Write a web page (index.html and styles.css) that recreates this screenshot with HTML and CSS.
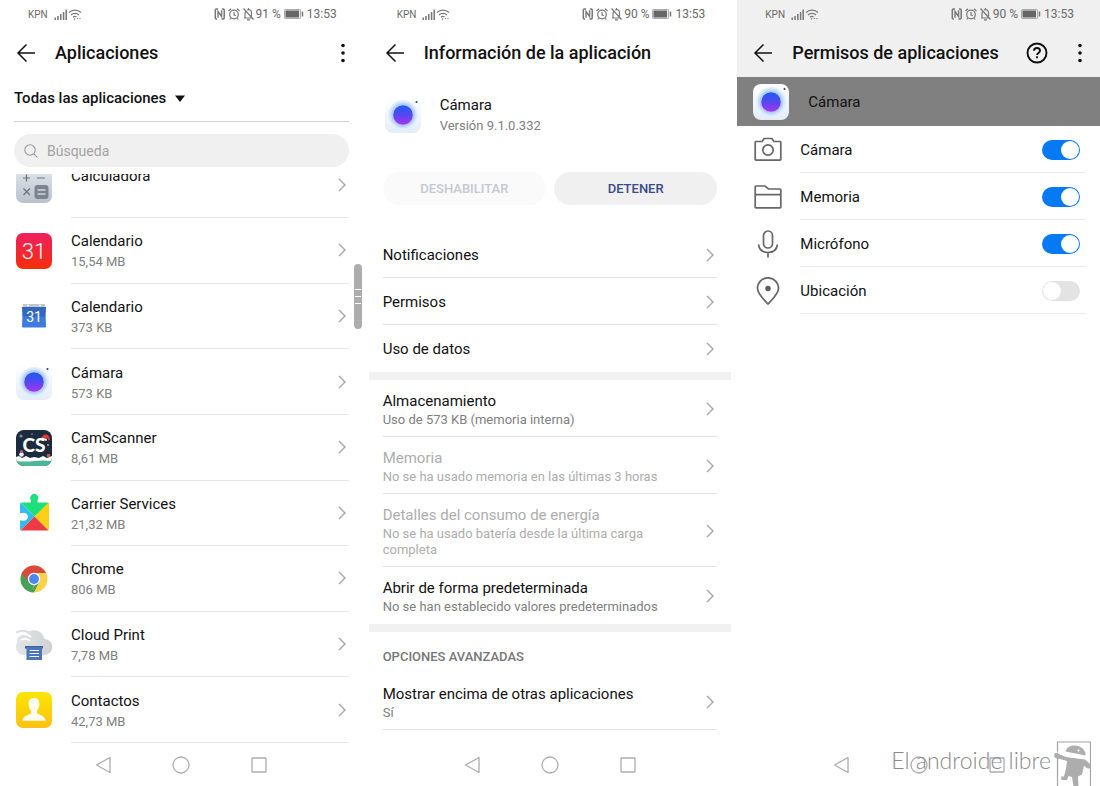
FILE: index.html
```html
<!DOCTYPE html>
<html lang="es">
<head>
<meta charset="utf-8">
<meta name="viewport" content="width=device-width, initial-scale=1">
<title>Permisos de aplicaciones</title>
<link rel="stylesheet" href="styles.css">
</head>
<body>
<svg class="sprite" aria-hidden="true">
  <defs>
    <linearGradient id="g-lens" x1="0" y1="0" x2="0" y2="1"><stop offset="0" stop-color="#1a5cf0"/><stop offset="0.5" stop-color="#5648ee"/><stop offset="1" stop-color="#a832f2"/></linearGradient>
    <linearGradient id="g-cam" x1="0" y1="0" x2="0" y2="1"><stop offset="0" stop-color="#ffffff"/><stop offset="1" stop-color="#e3edf6"/></linearGradient>
    <linearGradient id="g-red" x1="0" y1="0" x2="0" y2="1"><stop offset="0" stop-color="#f01f62"/><stop offset="1" stop-color="#f52e08"/></linearGradient>
    <linearGradient id="g-yellow" x1="0" y1="0" x2="0" y2="1"><stop offset="0" stop-color="#fbe600"/><stop offset="1" stop-color="#fcc111"/></linearGradient>
    <linearGradient id="g-calc" x1="0" y1="0" x2="0" y2="1"><stop offset="0" stop-color="#e4e8ee"/><stop offset="1" stop-color="#b9c1cc"/></linearGradient>
    <linearGradient id="g-cloud" x1="0" y1="0" x2="1" y2="0"><stop offset="0" stop-color="#e4e5e6"/><stop offset="1" stop-color="#cfd1d3"/></linearGradient>
    <clipPath id="c-cs"><rect width="36" height="36" rx="8"/></clipPath>
    <clipPath id="c-chrome"><circle cx="18" cy="18" r="13.500"/></clipPath>
    <clipPath id="c-puzzle"><path d="M5.500 7.500H15V5.200a4 4 0 1 1 6.500 0V7.500H31.500A1.500 1.500 0 0 1 33 9v25a1.500 1.500 0 0 1-1.500 1.500h-26A1.500 1.500 0 0 1 4 34v-8.500H6.500a4 4 0 1 0 0-7.500H4V9a1.500 1.500 0 0 1 1.500-1.500z"/></clipPath>
  </defs>
  <symbol id="i-back" viewBox="0 0 20 20"><path d="M10.500 1.500 2 10l8.500 8.500M2 10h17" fill="none" stroke="#111" stroke-width="1.500"/></symbol>
  <symbol id="i-dots" viewBox="0 0 6 20"><circle cx="3" cy="2.500" r="1.800"/><circle cx="3" cy="10" r="1.800"/><circle cx="3" cy="17.500" r="1.800"/></symbol>
  <symbol id="i-chevron" viewBox="0 0 8 14"><path d="m1 1 6 6-6 6" fill="none" stroke="#a6a6a6" stroke-width="1.400"/></symbol>
  <symbol id="i-signal" viewBox="0 0 28 14">
    <path d="M1.200 13v-2.500M4 13V9M6.800 13V7M9.600 13V5M12.200 13V2.500" stroke="#777" stroke-width="1.500" fill="none"/>
    <path d="M15 5.500a8.600 8.600 0 0 1 12 0M17 8a5.700 5.700 0 0 1 8 0M19 10.300a2.800 2.800 0 0 1 3.500-.3" stroke="#777" stroke-width="1.200" fill="none"/>
    <circle cx="20.600" cy="12" r=".8" fill="#777"/><path d="m22.500 12 1-1.300 1 1.300zm2.500-.8h2l-1 1.300z" fill="#777"/>
  </symbol>
  <symbol id="i-status" viewBox="0 0 42 14">
    <path d="M4 2H2.300Q1.300 2 1.300 3v8q0 1 1 1H3M8 2h1.200q1 0 1 1v8q0 1-1 1H7.500" stroke="#777" stroke-width="1.500" fill="none"/>
    <path d="M4 10.800V4.500l3.600 5V3.200" stroke="#777" stroke-width="1.400" fill="none"/>
    <g fill="none" stroke="#777" stroke-width="1.200"><circle cx="20" cy="7.500" r="4.300"/><path d="M20 5v2.800l1.800 1M14.500 4l2.500-2.200M25.500 4 23 1.800M17 11l-1.200 1.500M23 11l1.200 1.500"/></g>
    <g fill="none" stroke="#777" stroke-width="1.200"><path d="M30 11h8.500M31 10.500V6.500a3.500 3.500 0 0 1 .7-2M33 3a3 3 0 0 1 4.500 3v3.500M34.500 2.500V1M29.500 1.500l10 11M33 12.800h3"/></g>
  </symbol>
  <symbol id="i-battery" viewBox="0 0 20 10"><rect x=".5" y=".5" width="16" height="9" rx=".8" fill="#eee" stroke="#aaa"/><path d="M1.500 1.500h13.500v7H1.500z" fill="#666"/><path d="M18.500 2.500v5" stroke="#777" stroke-width="1.500"/></symbol>
  <symbol id="i-camera-app" viewBox="0 0 36 36">
    <rect width="36" height="36" rx="8" fill="url(#g-cam)"/>
    <circle cx="18" cy="18" r="15" fill="#e4effc"/><circle cx="18" cy="18" r="13.500" fill="#cfe1fb"/><circle cx="18" cy="18" r="11.700" fill="#b3cdf8"/>
    <circle cx="18" cy="18" r="9.800" fill="url(#g-lens)"/><circle cx="31.500" cy="5" r="1" fill="#333a4a"/>
  </symbol>
  <symbol id="i-nav-back" viewBox="0 0 16 18"><path d="M15 1.500v15L1.500 9z" fill="none" stroke="#adadad" stroke-width="1.300" stroke-linejoin="round"/></symbol>
  <symbol id="i-nav-home" viewBox="0 0 18 18"><circle cx="9" cy="9" r="8" fill="none" stroke="#adadad" stroke-width="1.300"/></symbol>
  <symbol id="i-nav-recent" viewBox="0 0 16 16"><rect x="1" y="1" width="14" height="14" rx=".5" fill="none" stroke="#adadad" stroke-width="1.300"/></symbol>
</svg>

<main class="screens">
  <section class="screen">
    <div class="status">
      <span class="carrier">KPN</span>
      <svg class="status-signal"><use href="#i-signal"/></svg>
      <svg class="status-icons"><use href="#i-status"/></svg>
      <span class="status-text">91 %</span>
      <svg class="battery"><use href="#i-battery"/></svg>
      <span class="status-text">13:53</span>
    </div>
    <header class="bar">
      <button class="icon-btn" aria-label="Atrás"><svg class="back"><use href="#i-back"/></svg></button>
      <h1 class="title">Aplicaciones</h1>
      <button class="icon-btn" aria-label="Más opciones"><svg class="dots"><use href="#i-dots"/></svg></button>
    </header>
    <div class="filter">
      <select class="filter-select" aria-label="Filtro de aplicaciones"><option>Todas las aplicaciones</option></select>
      <svg class="caret" viewBox="0 0 10 7"><path d="M0 .5h10L5 7z"/></svg>
    </div>
    <div class="search">
      <svg class="search-icon" viewBox="0 0 14 14" fill="none" stroke="#999" stroke-width="1.100"><circle cx="6" cy="6" r="5.200"/><path d="m9.800 9.800 3.500 3.500"/></svg>
      <input class="search-input" type="text" placeholder="Búsqueda" aria-label="Búsqueda">
    </div>
    <div class="list-wrap">
    <ul class="app-list">
      <li class="app-item app-item-clipped"><a class="app-row" href="#">
        <svg class="app-icon" viewBox="0 0 36 36"><rect width="36" height="36" rx="7" fill="url(#g-calc)"/><rect x="18.500" y="18" width="14" height="14" rx="3" fill="#7c8491"/><path d="M10.500 7.500v7M7 11h7M21 11h8M7.500 21.500l6.500 6.500M14 21.500 7.500 28" stroke="#6b727d" stroke-width="1.200"/><path d="M21.500 23h8M21.500 27h8" stroke="#fff" stroke-width="1.200"/></svg>
        <span class="app-main"><span class="app-text"><span class="name">Calculadora</span><span class="size"></span></span><svg class="chevron"><use href="#i-chevron"/></svg></span></a></li>
      <li class="app-item"><a class="app-row" href="#">
        <svg class="app-icon" viewBox="0 0 36 36"><rect width="36" height="36" rx="7" fill="url(#g-red)"/><text class="cal-big" x="18" y="26" text-anchor="middle">31</text></svg>
        <span class="app-main"><span class="app-text"><span class="name">Calendario</span><span class="size">15,54 MB</span></span><svg class="chevron"><use href="#i-chevron"/></svg></span></a></li>
      <li class="app-item"><a class="app-row" href="#">
        <svg class="app-icon" viewBox="0 0 36 36"><path d="M7 6h22v4H7z" fill="#c3c6cc"/><circle cx="12" cy="7.500" r="1" fill="#fff"/><circle cx="24" cy="7.500" r="1" fill="#fff"/><path d="M6 9h24l-.5 5 .5 14.500a1 1 0 0 1-1 1H7a1 1 0 0 1-1-1L6.500 14z" fill="#3f7bdc"/><path d="M6 9h24l-.8 9.500H6.800z" fill="#3367bd"/><text class="cal-small" x="18" y="24" text-anchor="middle">31</text></svg>
        <span class="app-main"><span class="app-text"><span class="name">Calendario</span><span class="size">373 KB</span></span><svg class="chevron"><use href="#i-chevron"/></svg></span></a></li>
      <li class="app-item"><a class="app-row" href="#">
        <svg class="app-icon"><use href="#i-camera-app"/></svg>
        <span class="app-main"><span class="app-text"><span class="name">Cámara</span><span class="size">573 KB</span></span><svg class="chevron"><use href="#i-chevron"/></svg></span></a></li>
      <li class="app-item"><a class="app-row" href="#">
        <svg class="app-icon" viewBox="0 0 36 36"><g clip-path="url(#c-cs)"><path d="M0 0h36v36H0z" fill="#1c2b3e"/><path d="M0 28.500q9 2 18 1t18 0V36H0z" fill="#4db598"/><path d="M0 27l3-1 3 2 4-2 4 2 4-1 5 1 4-2 4 2 5-2v5q-9-1-18 0T0 31z" fill="#fff"/><circle cx="5.500" cy="24.500" r="2.300" fill="#eef"/><circle cx="5.500" cy="21.500" r="1.500" fill="#d8584d"/><circle cx="32.500" cy="25.500" r="1.800" fill="#c85a50"/><circle cx="5" cy="6" r="1.600" fill="#7f8c9d"/><circle cx="32" cy="15" r=".9" fill="#b8c0ca"/><circle cx="16" cy="4" r=".7" fill="#b8c0ca"/></g><text class="cs" x="18" y="22" text-anchor="middle">CS</text><path d="M26 8q.5-4 4-3.500 3.500.5 4 5.500l-1.500.5-1.200-2.500-.8 1.500z" fill="#e03a35"/><path d="m25.500 7.500 5.500 1.800-.5 1.700-5.500-1.800z" fill="#fff"/></svg>
        <span class="app-main"><span class="app-text"><span class="name">CamScanner</span><span class="size">8,61 MB</span></span><svg class="chevron"><use href="#i-chevron"/></svg></span></a></li>
      <li class="app-item"><a class="app-row" href="#">
        <svg class="app-icon icon-over" viewBox="0 0 36 36"><g clip-path="url(#c-puzzle)"><path d="M0-5h36v12L18.500 21.500 4 7z" fill="#1ee07a"/><path d="M4 7 18.500 21.500 4 36z" fill="#2fbdf0"/><path d="M33 7v29L18.500 21.500z" fill="#fdcf17"/><path d="M4 36 18.500 21.500 33 36z" fill="#ec3b45"/></g></svg>
        <span class="app-main"><span class="app-text"><span class="name">Carrier Services</span><span class="size">21,32 MB</span></span><svg class="chevron"><use href="#i-chevron"/></svg></span></a></li>
      <li class="app-item"><a class="app-row" href="#">
        <svg class="app-icon" viewBox="0 0 36 36"><g clip-path="url(#c-chrome)"><path d="M4 4h28v28H4z" fill="#f9d24c"/><path d="M5 9 13 21l5 3-4 9H2z" fill="#43a15c"/><path d="M18 12h15V2H3l2.500 10L12.800 21z" fill="#d94a3d"/><path d="M23.200 21 17 33H13l6-9z" fill="#43a15c"/></g><circle cx="18" cy="18" r="6.200" fill="#f6f6f6"/><circle cx="18" cy="18" r="4.900" fill="#4b87ee"/></svg>
        <span class="app-main"><span class="app-text"><span class="name">Chrome</span><span class="size">806 MB</span></span><svg class="chevron"><use href="#i-chevron"/></svg></span></a></li>
      <li class="app-item"><a class="app-row" href="#">
        <svg class="app-icon" viewBox="0 0 36 36"><path d="M8 28a8 8 0 0 1-7-12C0 10 4 8 8 8 13 1 26 1 28.500 12A8 8 0 0 1 28 28z" fill="url(#g-cloud)"/><path d="M0 5.500Q8 1.500 14.500 6.500" fill="none" stroke="#dcdddf" stroke-width="2"/><path d="M0 8.500q9-4 15 1.500M5 13q5-2.500 9 1" fill="none" stroke="#fff" stroke-width="1.800"/><path d="M9 19h18v2.500H9z" fill="#3c5f9c"/><path d="M10.500 20h15.500v13H10.500z" fill="#4a77bb"/><path d="M13.500 23.500h9.500M13.500 26.500h9.500M13.500 29.500h9.500" stroke="#fff" stroke-width="1.200"/></svg>
        <span class="app-main"><span class="app-text"><span class="name">Cloud Print</span><span class="size">7,78 MB</span></span><svg class="chevron"><use href="#i-chevron"/></svg></span></a></li>
      <li class="app-item"><a class="app-row" href="#">
        <svg class="app-icon" viewBox="0 0 36 36"><rect width="36" height="36" rx="7" fill="url(#g-yellow)"/><path d="M18 6c4 0 5.500 2.500 5.300 6.500-.2 3.500-1.300 5-2.300 6.200v2.500c1.500 1.700 8.500 2 8.500 7.500H6.500c0-5.500 7-5.800 8.500-7.500v-2.500c-1-1.200-2.100-2.700-2.300-6.200C12.500 8.500 14 6 18 6z" fill="#fffdf2"/></svg>
        <span class="app-main"><span class="app-text"><span class="name">Contactos</span><span class="size">42,73 MB</span></span><svg class="chevron"><use href="#i-chevron"/></svg></span></a></li>
    </ul>
    <span class="thumb" aria-hidden="true"><i></i><i></i><i></i></span>
    </div>
    <nav class="nav">
      <button class="nav-btn" aria-label="Atrás"><svg class="nav-back"><use href="#i-nav-back"/></svg></button>
      <button class="nav-btn" aria-label="Inicio"><svg class="nav-home"><use href="#i-nav-home"/></svg></button>
      <button class="nav-btn" aria-label="Recientes"><svg class="nav-recent"><use href="#i-nav-recent"/></svg></button>
    </nav>
  </section>

  <section class="screen">
    <div class="status">
      <span class="carrier">KPN</span>
      <svg class="status-signal"><use href="#i-signal"/></svg>
      <svg class="status-icons"><use href="#i-status"/></svg>
      <span class="status-text">90 %</span>
      <svg class="battery"><use href="#i-battery"/></svg>
      <span class="status-text">13:53</span>
    </div>
    <header class="bar">
      <button class="icon-btn" aria-label="Atrás"><svg class="back"><use href="#i-back"/></svg></button>
      <h1 class="title">Información de la aplicación</h1>
    </header>
    <div class="app-card">
      <svg class="app-icon"><use href="#i-camera-app"/></svg>
      <div class="app-text"><span class="name">Cámara</span><span class="size">Versión 9.1.0.332</span></div>
    </div>
    <div class="actions">
      <button class="pill" disabled>DESHABILITAR</button>
      <button class="pill">DETENER</button>
    </div>
    <ul class="settings">
      <li><a class="setting" href="#"><span class="name">Notificaciones</span><svg class="chevron"><use href="#i-chevron"/></svg></a></li>
      <li><a class="setting" href="#"><span class="name">Permisos</span><svg class="chevron"><use href="#i-chevron"/></svg></a></li>
      <li><a class="setting" href="#"><span class="name">Uso de datos</span><svg class="chevron"><use href="#i-chevron"/></svg></a></li>
    </ul>
    <ul class="settings banded">
      <li><a class="setting" href="#"><span class="setting-text"><span class="name">Almacenamiento</span><span class="detail">Uso de 573 KB (memoria interna)</span></span><svg class="chevron"><use href="#i-chevron"/></svg></a></li>
      <li><a class="setting muted" href="#"><span class="setting-text"><span class="name">Memoria</span><span class="detail">No se ha usado memoria en las últimas 3 horas</span></span><svg class="chevron"><use href="#i-chevron"/></svg></a></li>
      <li><a class="setting muted" href="#"><span class="setting-text"><span class="name">Detalles del consumo de energía</span><span class="detail">No se ha usado batería desde la última carga completa</span></span><svg class="chevron"><use href="#i-chevron"/></svg></a></li>
      <li><a class="setting" href="#"><span class="setting-text"><span class="name">Abrir de forma predeterminada</span><span class="detail">No se han establecido valores predeterminados</span></span><svg class="chevron"><use href="#i-chevron"/></svg></a></li>
    </ul>
    <div class="advanced">
      <h2 class="group-title">OPCIONES AVANZADAS</h2>
      <a class="setting" href="#"><span class="setting-text"><span class="name">Mostrar encima de otras aplicaciones</span><span class="detail">Sí</span></span><svg class="chevron"><use href="#i-chevron"/></svg></a>
    </div>
    <nav class="nav">
      <button class="nav-btn" aria-label="Atrás"><svg class="nav-back"><use href="#i-nav-back"/></svg></button>
      <button class="nav-btn" aria-label="Inicio"><svg class="nav-home"><use href="#i-nav-home"/></svg></button>
      <button class="nav-btn" aria-label="Recientes"><svg class="nav-recent"><use href="#i-nav-recent"/></svg></button>
    </nav>
  </section>

  <section class="screen">
    <div class="top-shade">
    <div class="status">
      <span class="carrier">KPN</span>
      <svg class="status-signal"><use href="#i-signal"/></svg>
      <svg class="status-icons"><use href="#i-status"/></svg>
      <span class="status-text">90 %</span>
      <svg class="battery"><use href="#i-battery"/></svg>
      <span class="status-text">13:53</span>
    </div>
    <header class="bar">
      <button class="icon-btn" aria-label="Atrás"><svg class="back"><use href="#i-back"/></svg></button>
      <h1 class="title">Permisos de aplicaciones</h1>
      <button class="icon-btn help-btn" aria-label="Ayuda"><svg class="help" viewBox="0 0 22 22" fill="none" stroke="#111" stroke-width="1.900"><circle cx="11" cy="11" r="9.500"/><path d="M8 8.800C8 7 9.300 6 11 6s3 1.100 3 2.700c0 2.100-3 2.300-3 4.300"/><path d="M11 14.300v2"/></svg></button>
      <button class="icon-btn" aria-label="Más opciones"><svg class="dots"><use href="#i-dots"/></svg></button>
    </header>
    </div>
    <div class="app-banner"><svg class="app-icon"><use href="#i-camera-app"/></svg><span class="name">Cámara</span></div>
    <ul class="permissions">
      <li><label class="permission"><svg class="perm-icon" viewBox="0 0 28 28"><path d="M2 5.500h6.200L10 2.500h8l1.800 3H26a.8.800 0 0 1 .8.800v17a.8.800 0 0 1-.8.800H2a.8.800 0 0 1-.8-.8v-17A.8.800 0 0 1 2 5.500z"/><circle cx="14" cy="14" r="5.200"/></svg><span class="perm-main"><span class="name">Cámara</span><input class="switch" type="checkbox" role="switch" checked></span></label></li>
      <li><label class="permission"><svg class="perm-icon" viewBox="0 0 28 28"><path d="M2 3h9l3.500 3H26a.8.800 0 0 1 .8.800V24a.8.800 0 0 1-.8.800H2a.8.800 0 0 1-.8-.8V3.800A.8.800 0 0 1 2 3zM1.200 11.700h25.600"/></svg><span class="perm-main"><span class="name">Memoria</span><input class="switch" type="checkbox" role="switch" checked></span></label></li>
      <li><label class="permission"><svg class="perm-icon" viewBox="0 0 28 28"><rect x="9.500" y="1" width="9" height="17" rx="4.500"/><path d="M4.500 14.500c.8 5 4.500 8 9.500 8s8.700-3 9.500-8M14 22.500v5"/></svg><span class="perm-main"><span class="name">Micrófono</span><input class="switch" type="checkbox" role="switch" checked></span></label></li>
      <li><label class="permission"><svg class="perm-icon" viewBox="0 0 28 28"><path d="M14 27C9 21.500 3.500 17 3.500 11.300a10.500 10.500 0 0 1 21 0C24.500 17 19 21.500 14 27z"/><circle cx="14" cy="11.500" r="2.700" fill="#5c5c5c" stroke="none"/></svg><span class="perm-main"><span class="name">Ubicación</span><input class="switch" type="checkbox" role="switch"></span></label></li>
    </ul>
    <nav class="nav">
      <button class="nav-btn" aria-label="Atrás"><svg class="nav-back"><use href="#i-nav-back"/></svg></button>
      <button class="nav-btn" aria-label="Inicio"><svg class="nav-home"><use href="#i-nav-home"/></svg></button>
      <button class="nav-btn" aria-label="Recientes"><svg class="nav-recent"><use href="#i-nav-recent"/></svg></button>
    </nav>
    <div class="watermark">
      <span class="watermark-text">El androide libre</span>
      <svg class="watermark-logo" viewBox="0 0 38 45"><path d="M4.500 45V1h33v44" fill="#fff" stroke="#a3a3a3" stroke-width="1.200"/><g fill="#adadad"><path d="M12.500 10.500C14 5 20 3.500 25 5c5 1.500 7.800 5.500 7.500 9.500z"/><path d="M2 12c3 0 7 2.500 11 4l19 2.500 4 3.500c2 3 2 5 0 5.500-2 .3-3.800-1.800-5-3l-2 9-4 2 .5 10h-5l-1.500-9.500-3.500-1-1.500 4h-5.500l-.5-3.500h3l2-8 1-7.500-7-2C1.500 18 0 15 2 12z"/></g><path d="M1 10.500c4 0 7 3 12 4.300 6 1.700 12 2.500 20 1.700" fill="none" stroke="#fff" stroke-width="1"/><circle cx="25.500" cy="9.500" r="1" fill="#fff"/></svg>
    </div>
  </section>
</main>
</body>
</html>
```
FILE: styles.css
```css
* { box-sizing: border-box; }

body {
  margin: 0;
  background: #fff;
  color: #111;
  font-family: Roboto, "Liberation Sans", sans-serif;
  font-size: 15px;
}

ul { list-style: none; margin: 0; padding: 0; }
a { color: inherit; text-decoration: none; }
button { border: 0; background: none; padding: 0; font: inherit; color: inherit; cursor: pointer; }
svg { display: block; flex: none; }
.sprite { position: absolute; width: 0; height: 0; }

.screens {
  display: grid;
  grid-template-columns: repeat(3, minmax(0, 1fr));
  gap: 6px;
  min-height: 100vh;
}

.screen { position: relative; display: flex; flex-direction: column; }
.top-shade { background: #f0f0f0; }

/* Status bar */
.status {
  display: flex;
  align-items: center;
  height: 28px;
  padding: 0 26px 0 28px;
  color: #6a6a6a;
}
.carrier { font-size: 10px; margin-right: 6px; }
.status-signal { width: 28px; height: 14px; }
.status-icons { width: 42px; height: 14px; margin-left: auto; }
.status-text { font-size: 12px; }
.battery { width: 20px; height: 10px; margin: 0 3px; }

/* Title bar */
.bar { display: flex; align-items: center; height: 49px; padding: 0 17px 0 16px; }
.back { width: 20px; height: 20px; }
.dots { width: 6px; height: 20px; fill: #111; }
.title { flex: 1; margin: 0 0 0 19px; font-size: 18px; font-weight: 500; line-height: 24px; white-space: nowrap; }
.help { width: 22px; height: 22px; }
.help-btn { margin-right: 29px; }

/* Filter and search */
.filter {
  display: flex;
  align-items: center;
  gap: 8px;
  height: 45px;
  margin: 0 14px;
  padding-bottom: 2px;
  border-bottom: 1px solid #cfcfcf;
}
.filter-select {
  appearance: none;
  border: 0;
  padding: 0;
  background: none;
  color: #111;
  font: 500 15px/20px Roboto, "Liberation Sans", sans-serif;
}
.caret { width: 10px; height: 7px; fill: #111; }
.search {
  display: flex;
  align-items: center;
  gap: 9px;
  height: 33px;
  margin: 12px 14px 7px;
  padding: 0 10px;
  border-radius: 17px;
  background: #f0f0f0;
}
.search-icon { width: 14px; height: 14px; }
.search-input { flex: 1; min-width: 0; border: 0; padding: 0; background: none; outline: 0; font: 14px/20px Roboto, "Liberation Sans", sans-serif; }
.search-input::placeholder { color: #a3a3a3; opacity: 1; }

/* Application list */
.list-wrap { position: relative; flex: 1; display: flex; }
.app-list { flex: 1; display: grid; grid-template-rows: 44px repeat(8, minmax(65px, 1fr)); }
.app-item { display: flex; min-height: 0; }
.app-item-clipped { align-items: flex-end; overflow: hidden; }
.app-item-clipped .app-row { height: 66px; }
.app-row { flex: 1; display: flex; align-items: center; gap: 19px; padding: 0 14px 0 16px; }
.app-icon { width: 36px; height: 36px; }
.icon-over { overflow: visible; }
.app-main {
  flex: 1;
  align-self: stretch;
  display: flex;
  align-items: center;
  justify-content: space-between;
  padding-right: 3px;
  border-bottom: 1px solid #e6e6e6;
}
.app-main .app-text { padding-top: 2px; }
.app-text { display: flex; flex-direction: column; }
.name { font-size: 15px; line-height: 22px; }
.size { height: 20px; font-size: 13px; line-height: 20px; color: #808080; }
.chevron { width: 8px; height: 14px; }
.cal-big { font: 300 22px Roboto, sans-serif; fill: #fff; }
.cal-small { font: 400 14px Roboto, sans-serif; fill: #fff; }
.cs { font: 900 19px Lato, sans-serif; fill: #fff; }

.thumb {
  position: absolute;
  top: 90px;
  right: 1px;
  display: flex;
  flex-direction: column;
  align-items: center;
  justify-content: center;
  gap: 6px;
  width: 8px;
  height: 65px;
  border-radius: 4px;
  background: #adadad;
}
.thumb i { width: 6px; height: 1px; background: #fff; }

/* Application details */
.app-card { display: flex; align-items: center; gap: 19px; margin: 17px 16px 0; height: 42px; }
.actions { display: grid; grid-template-columns: 1fr 1fr; gap: 8px; padding: 36px 14px 26px; }
.pill { height: 33px; border-radius: 17px; background: #f0f0f0; color: #3b4a87; font-size: 13px; font-weight: 500; }
.pill:disabled { background: #fafafa; color: #c3c8d2; cursor: default; }
.setting {
  display: flex;
  align-items: center;
  justify-content: space-between;
  gap: 16px;
  min-height: 47px;
  margin: 0 14px;
  padding: 1px 3px 0 0;
  border-bottom: 1px solid #e2e2e2;
}
.settings li:last-child .setting { border-bottom-color: transparent; }
.setting-text { display: flex; flex-direction: column; flex: 1; padding: 9px 0 8px; }
.detail { padding-right: 24px; font-size: 13px; line-height: 16px; color: #808080; }
.muted, .muted .detail { color: #adadad; }
.banded { border-top: 8px solid #f1f1f1; border-bottom: 8px solid #f1f1f1; }
.group-title { margin: 0 14px; padding: 16px 0 7px; font-size: 13px; font-weight: 500; line-height: 18px; color: #777; }

/* Permissions */
.app-banner { display: flex; align-items: center; gap: 19px; height: 49px; padding: 0 16px; background: #808080; }
.permission { display: flex; align-items: center; gap: 18px; height: 47px; padding: 0 14px 0 17px; cursor: pointer; }
.perm-icon { width: 28px; height: 28px; fill: none; stroke: #666; stroke-width: 1.7; }
.perm-main {
  flex: 1;
  align-self: stretch;
  display: flex;
  align-items: center;
  justify-content: space-between;
  padding: 1px 6px 0 0;
  border-bottom: 1px solid #ebebeb;
}
.switch {
  appearance: none;
  display: flex;
  align-items: center;
  width: 38px;
  height: 20px;
  margin: 0;
  padding: 1px;
  border-radius: 10px;
  background: #e3e3e3;
  cursor: pointer;
}
.switch::before { content: ""; width: 18px; height: 18px; border-radius: 50%; background: #fff; }
.switch:checked { justify-content: flex-end; background: #067af5; }

/* Navigation buttons */
.nav { display: flex; justify-content: center; gap: 60px; height: 43px; margin-top: auto; }
.nav-btn { display: flex; align-items: center; justify-content: center; width: 18px; }
.nav-back { width: 16px; height: 18px; }
.nav-home { width: 18px; height: 18px; }
.nav-recent { width: 16px; height: 16px; }

.watermark { position: absolute; right: 9px; bottom: 0; display: flex; align-items: center; gap: 2px; pointer-events: none; }
.watermark-text { padding-bottom: 8px; font-family: Lato, sans-serif; font-size: 23px; font-weight: 300; line-height: 30px; color: #8a8a8a; white-space: nowrap; }
.watermark-logo { width: 38px; height: 45px; }
```
